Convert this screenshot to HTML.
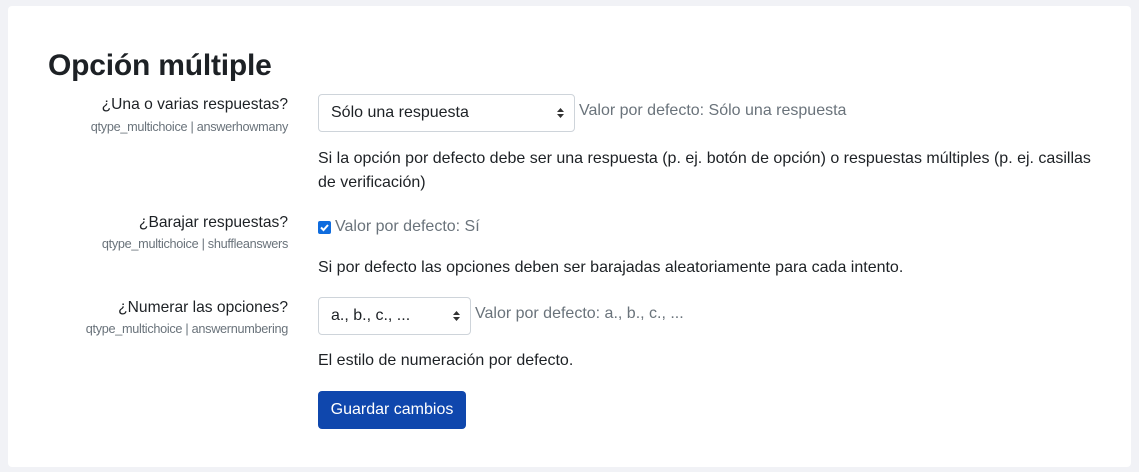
<!DOCTYPE html>
<html><head><meta charset="utf-8"><style>
body{margin:0;width:1139px;height:472px;background:#f1f2f6;font-family:"Liberation Sans",sans-serif;color:#1d2125;position:relative;overflow:hidden}
.card{position:absolute;left:8px;top:6px;width:1123px;height:461px;background:#fff;border-radius:4px}
.a{position:absolute;white-space:nowrap}
h1{position:absolute;left:48px;top:49px;margin:0;font-size:30px;font-weight:bold;letter-spacing:-0.2px;color:#1d2125}
.lab{right:851px;font-size:15.6px;text-align:right}
.sub{right:851px;font-size:12.7px;color:#6a737b;text-align:right;letter-spacing:-0.3px}
.txt{font-size:16px}
.grey{color:#6a737b;font-size:16px}
.sel{position:absolute;border:1px solid #ced4da;border-radius:4px;background:#fff;font-size:16px;box-sizing:border-box;padding-left:12px;display:flex;align-items:center}
.arr{position:absolute;right:10px;top:50%;transform:translateY(-50%);width:7px}
.btn{position:absolute;left:318px;top:391px;width:148px;height:38px;background:#0f47ad;border-radius:4px;color:#fff;font-size:16px;display:flex;align-items:center;justify-content:center}
.cb{position:absolute;left:318px;top:221px;width:13px;height:13px;background:#0f6cde;border-radius:2px}
</style></head><body>
<div class="card"></div>
<h1>Opción múltiple</h1>
<div class="a lab" style="top:96px">¿Una o varias respuestas?</div>
<div class="a sub" style="top:120px">qtype_multichoice | answerhowmany</div>
<div class="sel" style="left:318px;top:94px;width:257px;height:38px">Sólo una respuesta<svg class="arr" viewBox="0 0 7 10"><path d="M0 4L3.5 0L7 4Z M0 6L3.5 10L7 6Z" fill="#333"/></svg></div>
<div class="a grey" style="left:579px;top:102px">Valor por defecto: Sólo una respuesta</div>
<div class="a txt" style="left:318px;top:150px">Si la opción por defecto debe ser una respuesta (p. ej. botón de opción) o respuestas múltiples (p. ej. casillas</div>
<div class="a txt" style="left:318px;top:174px">de verificación)</div>
<div class="a lab" style="top:214px">¿Barajar respuestas?</div>
<div class="a sub" style="top:237px">qtype_multichoice | shuffleanswers</div>
<div class="cb"><svg viewBox="0 0 13 13" width="13" height="13"><path d="M3 6.5L5.5 9L10 4" stroke="#fff" stroke-width="2" fill="none"/></svg></div>
<div class="a grey" style="left:335px;top:218px">Valor por defecto: Sí</div>
<div class="a txt" style="left:318px;top:259px">Si por defecto las opciones deben ser barajadas aleatoriamente para cada intento.</div>
<div class="a lab" style="top:299px">¿Numerar las opciones?</div>
<div class="a sub" style="top:322px">qtype_multichoice | answernumbering</div>
<div class="sel" style="left:318px;top:297px;width:153px;height:38px">a., b., c., ...<svg class="arr" viewBox="0 0 7 10"><path d="M0 4L3.5 0L7 4Z M0 6L3.5 10L7 6Z" fill="#333"/></svg></div>
<div class="a grey" style="left:475px;top:305px">Valor por defecto: a., b., c., ...</div>
<div class="a txt" style="left:318px;top:352px">El estilo de numeración por defecto.</div>
<div class="btn">Guardar cambios</div>
</body></html>
